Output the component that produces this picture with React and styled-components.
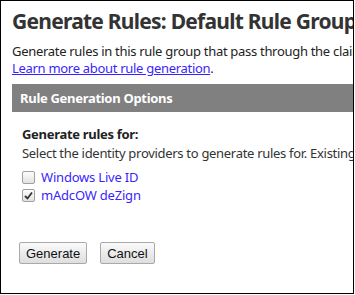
import React from 'react'
import styled, { createGlobalStyle } from 'styled-components'

const GlobalStyle = createGlobalStyle`
  html, body {
    margin: 0;
    padding: 0;
    background: #fff;
  }
  body {
    font-family: "Noto Sans", "Open Sans", sans-serif;
  }
`

const Frame = styled.div`
  width: 352px;
  height: 292px;
  border: 1px solid #000;
  overflow: hidden;
  background: #fff;
`

const Page = styled.div`
  width: 520px;
  padding: 6px 0 0 11px;
`

const Title = styled.h1`
  margin: 0;
  font-size: 21px;
  line-height: 28px;
  font-weight: 700;
  letter-spacing: -0.75px;
  color: #333;
  white-space: nowrap;
`

const Intro = styled.p`
  margin: 8px 0 0;
  font-size: 13px;
  line-height: 17px;
  letter-spacing: -0.3px;
  color: #222;
  white-space: nowrap;
`

const TextLink = styled.a`
  color: #3a1fff;
  text-decoration: underline;
  cursor: pointer;
`

const SectionBar = styled.div`
  margin-top: 7px;
  height: 28px;
  background: #808080;
  color: #fff;
  font-size: 13px;
  font-weight: 700;
  letter-spacing: -0.3px;
  line-height: 28px;
  padding-left: 8px;
`

const Section = styled.div`
  padding: 13px 0 0 10px;
`

const Label = styled.div`
  font-size: 13px;
  font-weight: 700;
  letter-spacing: -0.3px;
  line-height: 18px;
  color: #222;
`

const Hint = styled.div`
  margin-top: 2px;
  font-size: 13px;
  line-height: 17px;
  letter-spacing: -0.3px;
  color: #333;
  white-space: nowrap;
`

const Options = styled.div`
  margin-top: 6px;
  display: flex;
  flex-direction: column;
`

const Option = styled.label`
  display: flex;
  align-items: center;
  gap: 6px;
  height: 18px;
  font-size: 13px;
  letter-spacing: -0.2px;
  color: #3a1fff;
`

const Box = styled.span`
  box-sizing: border-box;
  width: 13px;
  height: 13px;
  border: 1px solid #a0a0a0;
  border-radius: 2px;
  background: linear-gradient(#fdfdfd, #e2e2e2);
  display: flex;
  align-items: center;
  justify-content: center;
`

const Buttons = styled.div`
  margin-top: 38px;
  margin-left: -3px;
  display: flex;
  gap: 13px;
`

const Button = styled.button`
  box-sizing: border-box;
  height: 22px;
  padding: 0 6px;
  font-family: "Liberation Sans", Arial, sans-serif;
  font-size: 13px;
  color: #111;
  border: 1px solid #a9a9a9;
  border-radius: 2px;
  background: linear-gradient(#fafafa, #dedede);
`

function Checkbox({ checked }) {
  return (
    <Box>
      {checked && (
        <svg width="9" height="9" viewBox="0 0 9 9">
          <path d="M1 5 L3.5 7.5 L8 1.5" fill="none" stroke="#333" strokeWidth="1.8" />
        </svg>
      )}
    </Box>
  )
}

export default function App() {
  return (
    <>
      <GlobalStyle />
      <Frame>
        <Page>
          <Title>Generate Rules: Default Rule Group</Title>
          <Intro>
            Generate rules in this rule group that pass through the claims from
            <br />
            <TextLink>Learn more about rule generation</TextLink>.
          </Intro>
          <SectionBar>Rule Generation Options</SectionBar>
          <Section>
            <Label>Generate rules for:</Label>
            <Hint>Select the identity providers to generate rules for. Existing rules</Hint>
            <Options>
              <Option>
                <Checkbox />
                Windows Live ID
              </Option>
              <Option>
                <Checkbox checked />
                mAdcOW deZign
              </Option>
            </Options>
            <Buttons>
              <Button>Generate</Button>
              <Button>Cancel</Button>
            </Buttons>
          </Section>
        </Page>
      </Frame>
    </>
  )
}
